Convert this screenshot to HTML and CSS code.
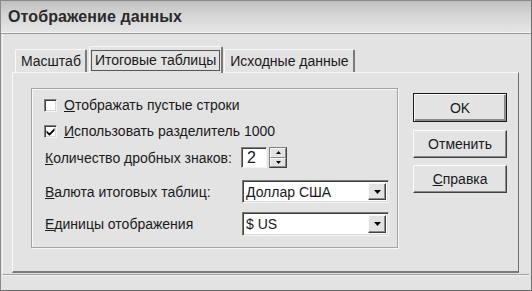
FILE: index.html
```html
<!DOCTYPE html>
<html lang="ru">
<head>
<meta charset="utf-8">
<title>Отображение данных</title>
<link rel="stylesheet" href="styles.css">
</head>
<body>
<div class="window">
  <div class="titlebar"><span class="title">Отображение данных</span></div>
  <div class="content">
    <div class="tabs">
      <div class="tab">Масштаб</div>
      <div class="tab active"><span class="focus">Итоговые таблицы</span></div>
      <div class="tab">Исходные данные</div>
    </div>
    <div class="panel">
      <div class="group">
        <div class="row row1">
          <span class="checkbox"></span>
          <span class="label"><u>О</u>тображать пустые строки</span>
        </div>
        <div class="row row2">
          <span class="checkbox checked">
            <svg width="9" height="9" viewBox="0 0 9 9"><path d="M0.5 3.5 L3.5 6.2 L8.5 1 L8.5 3.8 L3.5 8.8 L0.5 6 Z" fill="#000"/></svg>
          </span>
          <span class="label"><u>И</u>спользовать разделитель 1000</span>
        </div>
        <div class="field row3">
          <span class="label"><u>К</u>оличество дробных знаков:</span>
          <div class="spin">
            <span class="spin-input">2</span>
            <span class="spin-btns">
              <span class="spin-btn"><svg width="5" height="3" viewBox="0 0 5 3"><path d="M2.5 0 L5 3 L0 3 Z" fill="#000"/></svg></span>
              <span class="spin-btn"><svg width="5" height="3" viewBox="0 0 5 3"><path d="M0 0 L5 0 L2.5 3 Z" fill="#000"/></svg></span>
            </span>
          </div>
        </div>
        <div class="field row4">
          <span class="label"><u>В</u>алюта итоговых таблиц:</span>
          <div class="combo">
            <span class="combo-text">Доллар США</span>
            <span class="combo-btn"><svg width="7" height="4" viewBox="0 0 7 4"><path d="M0 0 L7 0 L3.5 4 Z" fill="#000"/></svg></span>
          </div>
        </div>
        <div class="field row5">
          <span class="label"><u>Е</u>диницы отображения</span>
          <div class="combo">
            <span class="combo-text">$ US</span>
            <span class="combo-btn"><svg width="7" height="4" viewBox="0 0 7 4"><path d="M0 0 L7 0 L3.5 4 Z" fill="#000"/></svg></span>
          </div>
        </div>
      </div>
      <div class="buttons">
        <div class="btn default"><span>OK</span></div>
        <div class="btn"><span>Отменить</span></div>
        <div class="btn"><span><u>С</u>правка</span></div>
      </div>
    </div>
  </div>
</div>
</body>
</html>
```

FILE: styles.css
```css
* { box-sizing: border-box; }
html, body { margin: 0; padding: 0; background: #e3e3e3; }
body { width: 532px; height: 291px; overflow: hidden; }

.window {
  width: 532px;
  height: 291px;
  border: 1px solid #8a8a8a;
  border-right-color: #6a6a6a;
  border-bottom-color: #6a6a6a;
  background: #e3e3e3;
  display: flex;
  flex-direction: column;
  font-family: "Liberation Sans", Arial, sans-serif;
  font-size: 14px;
  color: #1a1a1a;
}

.titlebar {
  height: 33px;
  flex: none;
  background: linear-gradient(#c0c0c0, #d4d4d4 40%, #e6e6e6);
  border-bottom: 1px solid #9a9a9a;
  box-shadow: inset 0 -1px 0 #f6f6f6;
  display: flex;
  align-items: center;
  padding-left: 7px;
}
.title {
  font-weight: bold;
  font-size: 16px;
  color: #2a2a2a;
  letter-spacing: 0.1px;
}

.content {
  flex: 1;
  padding: 11px 10px 0 9px;
  border-left: 1px solid #f4f4f4;
  margin: 0 2px 15px 1px;
  border-bottom: 1px solid #a0a0a0;
  box-shadow: 0 1px 0 #f2f2f2;
}

.tabs {
  display: flex;
  align-items: flex-end;
  height: 27px;
  padding-left: 3px;
}
.tab {
  height: 23px;
  padding: 0 4px 0 5px;
  display: flex;
  align-items: center;
  border-top: 1px solid #f8f8f8;
  border-left: 1px solid #f8f8f8;
  border-right: 2px solid #7a7a7a;
  border-radius: 2px 2px 0 0;
  margin-right: 2px;
}
.tab.active {
  height: 27px;
  padding: 0 1px;
  margin-right: 1px;
  position: relative;
  top: 1px;
  background: #e3e3e3;
}
.focus {
  border: 1px solid #555;
  padding: 1px 3px 2px;
  line-height: 16px;
}

.panel {
  height: 201px;
  border-top: 1px solid #f8f8f8;
  border-left: 1px solid #f8f8f8;
  border-right: 1px solid #6e6e6e;
  border-bottom: 2px solid #7a7a7a;
  display: flex;
  padding: 15px 11px 0 18px;
}

.group {
  width: 368px;
  height: 160px;
  border: 1px solid #a4a4a4;
  box-shadow: inset 1px 1px 0 #f8f8f8, 1px 1px 0 #f8f8f8;
  padding: 6px 0 0 13px;
  display: flex;
  flex-direction: column;
}

.row {
  display: flex;
  align-items: center;
  height: 20px;
}
.row2 { margin-top: 6px; }
.checkbox {
  width: 13px;
  height: 13px;
  background: #fff;
  border-top: 1px solid #808080;
  border-left: 1px solid #808080;
  border-right: 1px solid #f4f4f4;
  border-bottom: 1px solid #f4f4f4;
  box-shadow: inset 1px 1px 0 #404040, inset -1px -1px 0 #d8d8d8;
  margin: 0 7px 0 -1px;
  display: flex;
  align-items: center;
  justify-content: center;
}
.label { white-space: nowrap; }
u { text-decoration: underline; text-underline-offset: 1px; }

.field {
  display: grid;
  grid-template-columns: 196px auto;
  align-items: center;
}
.row3 { margin-top: 6px; height: 21px; }
.row4 { margin-top: 12px; height: 23px; }
.row5 { margin-top: 9px; height: 24px; }

.spin { display: flex; align-items: center; gap: 2px; }
.spin-input {
  width: 26px;
  height: 21px;
  background: #fff;
  border-top: 1px solid #808080;
  border-left: 1px solid #808080;
  border-right: 1px solid #f4f4f4;
  border-bottom: 1px solid #f4f4f4;
  box-shadow: inset 1px 1px 0 #404040;
  font-size: 16px;
  line-height: 19px;
  padding-left: 5px;
}
.spin-btns {
  width: 18px;
  height: 21px;
  display: flex;
  flex-direction: column;
  border: 1px solid #404040;
  border-top-color: #808080;
  border-left-color: #808080;
  background: #fff;
}
.spin-btn {
  flex: 1;
  display: flex;
  align-items: center;
  justify-content: center;
  background: #e3e3e3;
  border-top: 1px solid #fafafa;
  border-left: 1px solid #fafafa;
  border-right: 1px solid #8a8a8a;
  border-bottom: 1px solid #8a8a8a;
}

.combo {
  width: 147px;
  height: 100%;
  background: #fff;
  border-top: 1px solid #7a7a7a;
  border-left: 1px solid #7a7a7a;
  border-right: 1px solid #f4f4f4;
  border-bottom: 1px solid #f4f4f4;
  box-shadow: inset 1px 1px 0 #404040, inset -1px -1px 0 #d8d8d8;
  display: flex;
  align-items: center;
  padding: 2px 2px 2px 3px;
  margin-left: 1px;
}
.combo-text { flex: 1; font-size: 14px; }
.combo-btn {
  width: 18px;
  height: 100%;
  background: #e3e3e3;
  border-top: 1px solid #fafafa;
  border-left: 1px solid #fafafa;
  border-right: 1px solid #404040;
  border-bottom: 1px solid #404040;
  box-shadow: inset -1px -1px 0 #8a8a8a;
  display: flex;
  align-items: center;
  justify-content: center;
}

.buttons {
  margin-left: 15px;
  padding-top: 5px;
  display: flex;
  flex-direction: column;
  width: 94px;
}
.btn {
  height: 28px;
  border-top: 1px solid #fafafa;
  border-left: 1px solid #fafafa;
  border-right: 1px solid #404040;
  border-bottom: 1px solid #404040;
  box-shadow: inset -1px -1px 0 #8a8a8a;
  display: flex;
  align-items: center;
  justify-content: center;
  margin-bottom: 8px;
}
.btn + .btn { margin-bottom: 7px; }
.btn.default {
  height: 29px;
  border: 1px solid #1a1a1a;
  box-shadow: inset 1px 1px 0 #fafafa, inset -2px -2px 0 #8a8a8a, inset -1px -1px 0 #404040;
}
```
